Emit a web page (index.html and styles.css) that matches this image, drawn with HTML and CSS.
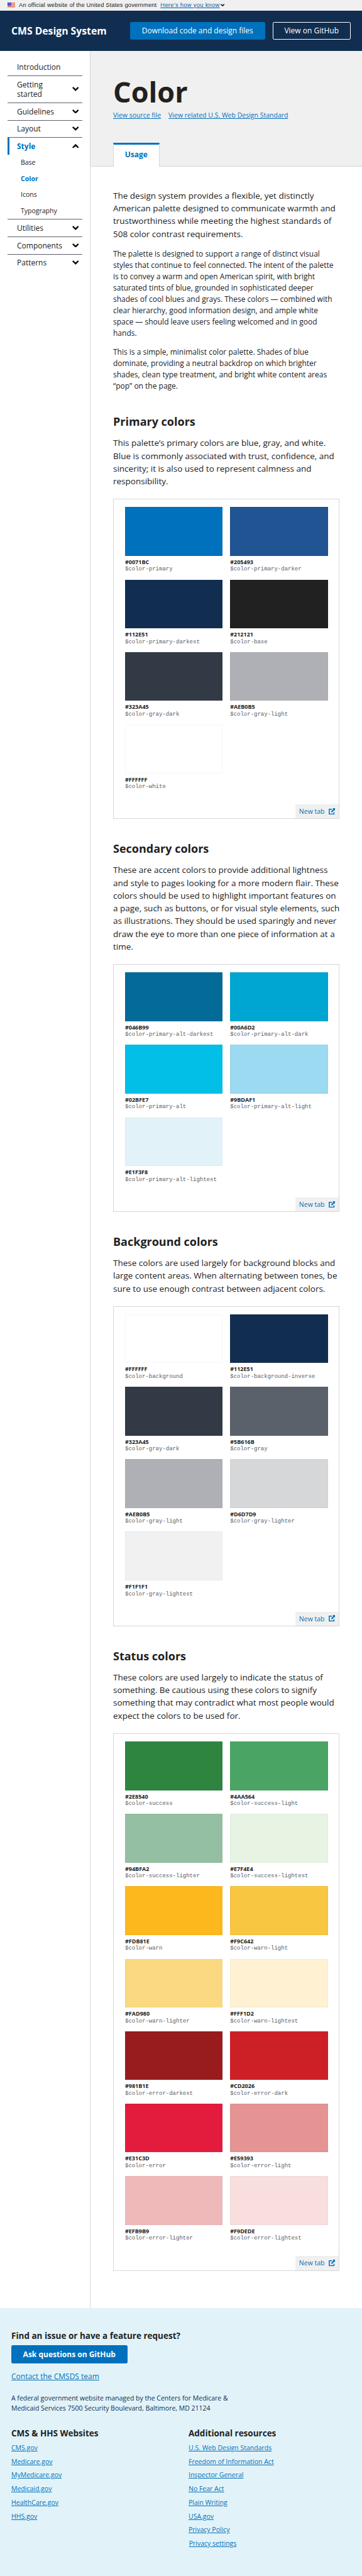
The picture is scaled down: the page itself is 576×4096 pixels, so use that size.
FILE: index.html
```html
<!DOCTYPE html>
<html lang="en">
<head>
<meta charset="utf-8">
<title>Color - CMS Design System</title>
<link rel="stylesheet" href="styles.css">
</head>
<body>
<svg class="defs" width="0" height="0" aria-hidden="true">
  <symbol id="chevron" viewBox="0 0 14 9"><path d="M2 2l5 5 5-5" fill="none" stroke="#000" stroke-width="3.2" stroke-linecap="round" stroke-linejoin="miter"/></symbol>
  <symbol id="external" viewBox="0 0 14 14"><path d="M7 2.2H1.2v10.6h10V8.5" fill="none" stroke="#0071bc" stroke-width="2"/><path d="M8 0h6v6l-2-2-5.2 5.4-2-2L10 2z" fill="#0071bc"/></symbol>
</svg>

<div class="banner">
  <svg class="flag" viewBox="0 0 16 11"><rect width="16" height="11" fill="#fff"/><path d="M0 .5h16M0 2.5h16M0 4.5h16M0 6.5h16M0 8.5h16M0 10.5h16" stroke="#e0341c" stroke-width="1"/><rect width="8" height="7" fill="#1b33c4"/><path d="M1 1.5h7M2 3.5h6M1 5.5h7" stroke="#fff" stroke-width=".9" stroke-dasharray="1 1"/></svg>
  <span class="banner-text">An official website of the United States government</span>
  <a class="banner-link">Here’s how you know</a>
  <svg class="banner-chevron"><use href="#chevron"/></svg>
</div>

<header class="header">
  <div class="logo">CMS Design System</div>
  <div class="header-actions">
    <a class="btn btn-primary">Download code and design files</a>
    <a class="btn btn-outline">View on GitHub</a>
  </div>
</header>

<div class="layout">
  <nav class="nav">
    <div class="nav-item"><span>Introduction</span></div>
    <div class="nav-item"><span>Getting<br>started</span><svg class="chevron"><use href="#chevron"/></svg></div>
    <div class="nav-item"><span>Guidelines</span><svg class="chevron"><use href="#chevron"/></svg></div>
    <div class="nav-item"><span>Layout</span><svg class="chevron"><use href="#chevron"/></svg></div>
    <div class="nav-item nav-open"><span>Style</span><svg class="chevron chevron-up"><use href="#chevron"/></svg></div>
    <div class="subnav">
      <a>Base</a>
      <a class="current">Color</a>
      <a>Icons</a>
      <a>Typography</a>
    </div>
    <div class="nav-item"><span>Utilities</span><svg class="chevron"><use href="#chevron"/></svg></div>
    <div class="nav-item"><span>Components</span><svg class="chevron"><use href="#chevron"/></svg></div>
    <div class="nav-item nav-last"><span>Patterns</span><svg class="chevron"><use href="#chevron"/></svg></div>
  </nav>

  <main class="main">
    <div class="page-header">
      <h1>Color</h1>
      <div class="page-links"><a>View source file</a><a>View related U.S. Web Design Standard</a></div>
      <div class="tab">Usage</div>
    </div>
    <div class="content">
      <p class="lead">The design system provides a flexible, yet distinctly American palette designed to communicate warmth and trustworthiness while meeting the highest standards of 508 color contrast requirements.</p>
      <p class="body-text">The palette is designed to support a range of distinct visual styles that continue to feel connected. The intent of the palette is to convey a warm and open American spirit, with bright saturated tints of blue, grounded in sophisticated deeper shades of cool blues and grays. These colors — combined with clear hierarchy, good information design, and ample white space — should leave users feeling welcomed and in good hands.</p>
      <p class="body-text">This is a simple, minimalist color palette. Shades of blue dominate, providing a neutral backdrop on which brighter shades, clean type treatment, and bright white content areas “pop” on the page.</p>

      <section>
        <h2>Primary colors</h2>
        <p class="lead">This palette’s primary colors are blue, gray, and white. Blue is commonly associated with trust, confidence, and sincerity; it is also used to represent calmness and responsibility.</p>
        <div class="example">
          <div class="swatches">
            <div class="swatch"><i style="background:#0071bc"></i><b>#0071BC</b><code>$color-primary</code></div>
            <div class="swatch"><i style="background:#205493"></i><b>#205493</b><code>$color-primary-darker</code></div>
            <div class="swatch"><i style="background:#112e51"></i><b>#112E51</b><code>$color-primary-darkest</code></div>
            <div class="swatch"><i style="background:#212121"></i><b>#212121</b><code>$color-base</code></div>
            <div class="swatch"><i style="background:#323a45"></i><b>#323A45</b><code>$color-gray-dark</code></div>
            <div class="swatch"><i style="background:#aeb0b5"></i><b>#AEB0B5</b><code>$color-gray-light</code></div>
            <div class="swatch"><i style="background:#ffffff"></i><b>#FFFFFF</b><code>$color-white</code></div>
          </div>
          <a class="new-tab">New tab<svg class="external"><use href="#external"/></svg></a>
        </div>
      </section>

      <section>
        <h2>Secondary colors</h2>
        <p class="lead">These are accent colors to provide additional lightness and style to pages looking for a more modern flair. These colors should be used to highlight important features on a page, such as buttons, or for visual style elements, such as illustrations. They should be used sparingly and never draw the eye to more than one piece of information at a time.</p>
        <div class="example">
          <div class="swatches">
            <div class="swatch"><i style="background:#046b99"></i><b>#046B99</b><code>$color-primary-alt-darkest</code></div>
            <div class="swatch"><i style="background:#00a6d2"></i><b>#00A6D2</b><code>$color-primary-alt-dark</code></div>
            <div class="swatch"><i style="background:#02bfe7"></i><b>#02BFE7</b><code>$color-primary-alt</code></div>
            <div class="swatch"><i style="background:#9bdaf1"></i><b>#9BDAF1</b><code>$color-primary-alt-light</code></div>
            <div class="swatch"><i style="background:#e1f3f8"></i><b>#E1F3F8</b><code>$color-primary-alt-lightest</code></div>
          </div>
          <a class="new-tab">New tab<svg class="external"><use href="#external"/></svg></a>
        </div>
      </section>

      <section>
        <h2>Background colors</h2>
        <p class="lead">These colors are used largely for background blocks and large content areas. When alternating between tones, be sure to use enough contrast between adjacent colors.</p>
        <div class="example">
          <div class="swatches">
            <div class="swatch"><i style="background:#ffffff"></i><b>#FFFFFF</b><code>$color-background</code></div>
            <div class="swatch"><i style="background:#112e51"></i><b>#112E51</b><code>$color-background-inverse</code></div>
            <div class="swatch"><i style="background:#323a45"></i><b>#323A45</b><code>$color-gray-dark</code></div>
            <div class="swatch"><i style="background:#5b616b"></i><b>#5B616B</b><code>$color-gray</code></div>
            <div class="swatch"><i style="background:#aeb0b5"></i><b>#AEB0B5</b><code>$color-gray-light</code></div>
            <div class="swatch"><i style="background:#d6d7d9"></i><b>#D6D7D9</b><code>$color-gray-lighter</code></div>
            <div class="swatch"><i style="background:#f1f1f1"></i><b>#F1F1F1</b><code>$color-gray-lightest</code></div>
          </div>
          <a class="new-tab">New tab<svg class="external"><use href="#external"/></svg></a>
        </div>
      </section>

      <section>
        <h2>Status colors</h2>
        <p class="lead">These colors are used largely to indicate the status of something. Be cautious using these colors to signify something that may contradict what most people would expect the colors to be used for.</p>
        <div class="example">
          <div class="swatches">
            <div class="swatch"><i style="background:#2e8540"></i><b>#2E8540</b><code>$color-success</code></div>
            <div class="swatch"><i style="background:#4aa564"></i><b>#4AA564</b><code>$color-success-light</code></div>
            <div class="swatch"><i style="background:#94bfa2"></i><b>#94BFA2</b><code>$color-success-lighter</code></div>
            <div class="swatch"><i style="background:#e7f4e4"></i><b>#E7F4E4</b><code>$color-success-lightest</code></div>
            <div class="swatch"><i style="background:#fdb81e"></i><b>#FDB81E</b><code>$color-warn</code></div>
            <div class="swatch"><i style="background:#f9c642"></i><b>#F9C642</b><code>$color-warn-light</code></div>
            <div class="swatch"><i style="background:#fad980"></i><b>#FAD980</b><code>$color-warn-lighter</code></div>
            <div class="swatch"><i style="background:#fff1d2"></i><b>#FFF1D2</b><code>$color-warn-lightest</code></div>
            <div class="swatch"><i style="background:#981b1e"></i><b>#981B1E</b><code>$color-error-darkest</code></div>
            <div class="swatch"><i style="background:#cd2026"></i><b>#CD2026</b><code>$color-error-dark</code></div>
            <div class="swatch"><i style="background:#e31c3d"></i><b>#E31C3D</b><code>$color-error</code></div>
            <div class="swatch"><i style="background:#e59393"></i><b>#E59393</b><code>$color-error-light</code></div>
            <div class="swatch"><i style="background:#efb9b9"></i><b>#EFB9B9</b><code>$color-error-lighter</code></div>
            <div class="swatch"><i style="background:#f9dede"></i><b>#F9DEDE</b><code>$color-error-lightest</code></div>
          </div>
          <a class="new-tab">New tab<svg class="external"><use href="#external"/></svg></a>
        </div>
      </section>
    </div>
  </main>
</div>

<footer class="footer">
  <h3>Find an issue or have a feature request?</h3>
  <a class="btn btn-primary btn-bold">Ask questions on GitHub</a>
  <div class="contact"><a>Contact the CMSDS team</a></div>
  <p class="address">A federal government website managed by the Centers for Medicare &amp;<br>Medicaid Services 7500 Security Boulevard, Baltimore, MD 21124</p>
  <div class="footer-columns">
    <div class="footer-links">
      <h3>CMS &amp; HHS Websites</h3>
      <div><a>CMS.gov</a></div>
      <div><a>Medicare.gov</a></div>
      <div><a>MyMedicare.gov</a></div>
      <div><a>Medicaid.gov</a></div>
      <div><a>HealthCare.gov</a></div>
      <div><a>HHS.gov</a></div>
    </div>
    <div class="footer-links">
      <h3>Additional resources</h3>
      <div><a>U.S. Web Design Standards</a></div>
      <div><a>Freedom of Information Act</a></div>
      <div><a>Inspector General</a></div>
      <div><a>No Fear Act</a></div>
      <div><a>Plain Writing</a></div>
      <div><a>USA.gov</a></div>
      <div><a>Privacy Policy</a></div>
      <div class="privacy-settings"><a>Privacy settings</a></div>
    </div>
  </div>
</footer>
</body>
</html>
```
FILE: styles.css
```css
* { box-sizing: border-box; }

body {
  margin: 0;
  width: 576px;
  height: 4096px;
  display: flex;
  flex-direction: column;
  background: #fff;
  color: #212121;
  font-family: "Open Sans", sans-serif;
  font-size: 12px;
  line-height: 18px;
}

h1, h2, h3, p { margin: 0; }
.defs { position: absolute; }

/* Government banner */
.banner {
  flex: none;
  height: 16.5px;
  padding-left: 12px;
  display: flex;
  align-items: center;
  background: #f0f0f0;
  font-family: "Liberation Sans", sans-serif;
  font-size: 9.3px;
  line-height: 13.5px;
  letter-spacing: 0.18px;
  white-space: nowrap;
}
.flag { width: 12px; height: 8.25px; margin: -1px 6px 0 0; }
.banner-text { margin-right: 6px; }
.banner-link { color: #0062a8; text-decoration: underline; letter-spacing: 0.32px; }
.banner-chevron { width: 6.4px; height: 4.2px; margin-left: 1.5px; }

/* Header */
.header {
  flex: none;
  height: 64.5px;
  padding: 0 18px;
  display: flex;
  align-items: center;
  justify-content: space-between;
  background: #112e51;
  color: #fff;
}
.logo { font-size: 15.75px; font-weight: 700; line-height: 24px; white-space: nowrap; }
.header-actions { display: flex; gap: 12px; }

.btn {
  display: inline-flex;
  align-items: center;
  justify-content: center;
  height: 28.5px;
  border: 1px solid transparent;
  border-radius: 2.25px;
  color: #fff;
  white-space: nowrap;
}
.btn-primary { width: 214.5px; background: #0071bc; border-color: #0071bc; }
.btn-outline { width: 124.5px; border-color: #fff; }
.btn-bold { width: 184.5px; font-weight: 700; }

/* Layout */
.layout { display: flex; flex: none; height: 3588.75px; }

.nav {
  width: 144px;
  flex: none;
  padding: 12px 12px 0;
  border-right: 1px solid #d6d7d9;
}
.nav-item {
  display: flex;
  align-items: center;
  justify-content: space-between;
  padding: 6px 6px 6px 15px;
  border-bottom: 0.75px solid #5b616b;
  margin-bottom: -0.25px;
  line-height: 15px;
}
.nav-open {
  padding-left: 12px;
  border-left: 3px solid #0071bc;
  border-bottom: 0;
  margin-bottom: 0;
  color: #0071bc;
  font-weight: 700;
}
.nav-last { border-bottom: 0; }
.chevron { width: 10.5px; height: 6.75px; }
.chevron-up { transform: rotate(180deg); }
.subnav {
  border-bottom: 0.75px solid #5b616b;
  margin-bottom: -0.25px;
  font-size: 10.5px;
}
.subnav a { display: block; padding-left: 21px; line-height: 25.5px; }
.subnav .current { color: #0071bc; font-weight: 700; }

.main { flex: 1; min-width: 0; }
.page-header {
  height: 183.75px;
  padding: 36px 36px 0;
  display: flex;
  flex-direction: column;
  align-items: flex-start;
  background: #f0f0f0;
  box-shadow: inset 0 -1px #d6d7d9;
}
h1 { font-size: 45px; line-height: 58.5px; font-weight: 700; }
.page-links {
  display: flex;
  gap: 12px;
  font-size: 10.5px;
  line-height: 15.75px;
  white-space: nowrap;
}
.page-links a, .contact a, .footer-links a { color: #0071bc; text-decoration: underline; }
.tab {
  width: 73.5px;
  height: 37.5px;
  margin-top: auto;
  background: #fff;
  border: 1px solid #d6d7d9;
  border-top: 3px solid #0071bc;
  border-bottom: 0;
  color: #0071bc;
  font-weight: 700;
  line-height: 31px;
  text-align: center;
}

.content { padding: 36px 36px 0; }
.lead { font-size: 13.5px; line-height: 20.25px; margin-right: -4px; }
.body-text { line-height: 18px; margin-top: 12px; margin-right: 4px; }
.lead + .body-text { margin-top: 13.5px; }

section { margin-top: 36px; }
h2 { font-size: 18px; line-height: 23.4px; font-weight: 700; margin-bottom: 11.7px; }

.example {
  margin-top: 18px;
  border: 1px solid #d6d7d9;
  display: flex;
  flex-direction: column;
  align-items: flex-end;
}
.swatches {
  align-self: stretch;
  display: grid;
  grid-template-columns: 155.25px 155.25px;
  column-gap: 12px;
  grid-auto-rows: 115.2px;
  padding: 12px 0 12px 18px;
}
.swatch { display: flex; flex-direction: column; }
.swatch i { height: 77.6px; flex: none; border: 1px solid rgba(0, 0, 0, 0.03); }
.swatch b { margin-top: 3px; font-size: 9px; line-height: 13.5px; }
.swatch code {
  color: #5b616b;
  font-family: "Liberation Mono", monospace;
  font-size: 9px;
  line-height: 10.5px;
}
.new-tab {
  display: flex;
  align-items: center;
  gap: 6px;
  height: 22.25px;
  padding: 0 6px;
  background: #f0f0f0;
  color: #0071bc;
  font-size: 10.5px;
}
.external { width: 10.5px; height: 10.5px; }

/* Footer */
.footer {
  flex: 1;
  min-height: 0;
  padding: 36px 18px 0;
  background: #e1f3f8;
}
h3 { font-size: 13.5px; line-height: 17.55px; font-weight: 700; margin-bottom: 6px; }
.footer .btn { display: flex; }
.contact { margin-top: 12px; line-height: 18px; }
.address { margin-top: 18px; color: #112e51; font-size: 10.5px; line-height: 15.75px; }
.footer-columns { display: grid; grid-template-columns: 282px 1fr; margin-top: 24px; }
.footer-links { font-size: 10.5px; line-height: 15.75px; }
.footer-links div { margin-bottom: 6px; }
.privacy-settings { padding-left: 0.75px; }
```
